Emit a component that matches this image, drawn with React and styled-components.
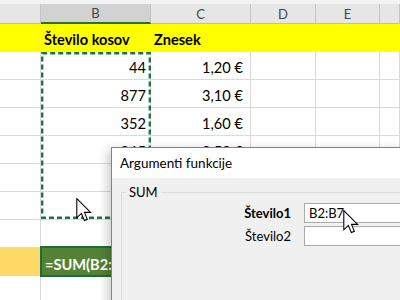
import React from 'react';
import styled, { createGlobalStyle } from 'styled-components';

const GlobalStyle = createGlobalStyle`
  html, body {
    margin: 0;
    padding: 0;
    background: #fff;
  }
  body {
    font-family: Lato, "Liberation Sans", sans-serif;
  }
`;

const Page = styled.div`
  position: relative;
  width: 400px;
  height: 300px;
  overflow: hidden;
  background: #fff;
`;

const TopStrip = styled.div`
  height: 4px;
  background: #f3f3f3;
`;

const Sheet = styled.div`
  position: relative;
  display: grid;
  grid-template-columns: 41px 110px 100px 65px 64px 1fr;
  grid-template-rows: 20px;
  grid-auto-rows: 28px;
`;

const ColHead = styled.div`
  box-sizing: border-box;
  display: flex;
  align-items: center;
  justify-content: center;
  background: ${p => (p.selected ? '#d2d2d2' : '#e6e6e6')};
  border-right: 1px solid #c4c4c4;
  border-bottom: ${p => (p.selected ? '2px solid #217346' : '1px solid #bdbdbd')};
  color: #444;
  font-size: 13px;
`;

const Cell = styled.div`
  box-sizing: border-box;
  display: flex;
  align-items: center;
  justify-content: ${p => (p.right ? 'flex-end' : 'flex-start')};
  padding: 3px ${p => (p.right ? p.pr || 4 : 3)}px 0 3px;
  background: ${p => p.fill || '#fff'};
  border-right: 1px solid ${p => p.fill || '#dadada'};
  border-bottom: 1px solid ${p => p.fill || '#dadada'};
  font-size: 14.6px;
  font-weight: ${p => (p.bold ? 700 : 400)};
  color: #000;
  white-space: nowrap;
  overflow: hidden;
`;

const FormulaCell = styled.div`
  box-sizing: border-box;
  margin: -2px 0 -1px -1px;
  display: flex;
  align-items: center;
  padding: 5px 0 0 3px;
  background: #548235;
  border: 2px solid #1e6b3c;
  color: #fff;
  font-size: 14.6px;
  font-weight: 700;
  white-space: nowrap;
  overflow: hidden;
  position: relative;
  z-index: 1;
`;

const Marquee = styled.svg`
  position: absolute;
  left: 41px;
  top: 48px;
  overflow: visible;
  z-index: 2;
`;

const Pointer = styled.svg`
  position: absolute;
  left: ${p => p.x}px;
  top: ${p => p.y}px;
  z-index: 10;
`;

const Dialog = styled.div`
  position: absolute;
  left: 111px;
  top: 147px;
  width: 320px;
  height: 180px;
  background: #f0f0f0;
  border: 1px solid #5c88c5;
  box-shadow: -3px 3px 10px rgba(0, 0, 0, 0.22);
  font-family: Lato, "Noto Sans", sans-serif;
  color: #000;
  z-index: 5;
`;

const TitleBar = styled.div`
  height: 30px;
  display: flex;
  align-items: center;
  padding-left: 8px;
  background: #fff;
  font-size: 13.5px;
`;

const Body = styled.div`
  padding: 6px 0 0 9px;
`;

const Group = styled.fieldset`
  margin: 0;
  padding: 3px 0 0 0;
  height: 200px;
  border: 1px solid #dcdcdc;
  border-right: none;
  border-bottom: none;
`;

const Legend = styled.legend`
  margin-left: 4px;
  padding: 0 3px;
  font-size: 13px;
`;

const Fields = styled.div`
  display: grid;
  grid-template-columns: 169px 1fr;
  column-gap: 13px;
  row-gap: 3px;
  align-items: center;
`;

const Label = styled.div`
  text-align: right;
  font-size: 13px;
  font-weight: ${p => (p.bold ? 700 : 400)};
`;

const Input = styled.div`
  box-sizing: border-box;
  height: 20px;
  width: 200px;
  display: flex;
  align-items: center;
  padding-left: 4px;
  background: #fff;
  border: 1px solid #ababab;
  font-size: 13px;
`;

const rows = [
  ['44', '1,20 €'],
  ['877', '3,10 €'],
  ['352', '1,60 €'],
  ['965', '2,50 €'],
  ['', ''],
  ['', ''],
  ['', ''],
];

const Arrow = ({ x, y }) => (
  <Pointer x={x} y={y} width="16" height="24" viewBox="0 0 13 20">
    <path
      d="M0.5 0.5 L0.5 16.5 L4.3 12.8 L6.8 18.8 L9.3 17.8 L6.9 12 L12 12 Z"
      fill="#fff"
      stroke="#000"
      strokeWidth="0.9"
      strokeLinejoin="miter"
    />
  </Pointer>
);

export default function App() {
  const heads = ['', 'B', 'C', 'D', 'E', ''];
  return (
    <Page>
      <GlobalStyle />
      <TopStrip />
      <Sheet>
        {heads.map((h, i) => (
          <ColHead key={'h' + i} selected={h === 'B'}>{h}</ColHead>
        ))}

        <Cell fill="#ffff00" />
        <Cell fill="#ffff00" bold>Število kosov</Cell>
        <Cell fill="#ffff00" bold>Znesek</Cell>
        <Cell fill="#ffff00" />
        <Cell fill="#ffff00" />
        <Cell fill="#ffff00" />

        {rows.map(([b, c], i) => (
          <React.Fragment key={'r' + i}>
            <Cell />
            <Cell right>{b}</Cell>
            <Cell right pr={7}>{c}</Cell>
            <Cell />
            <Cell />
            <Cell />
          </React.Fragment>
        ))}

        <Cell fill="#ffd966" />
        <FormulaCell>=SUM(B2:B</FormulaCell>
        <Cell />
        <Cell />
        <Cell />
        <Cell />

        {[0, 1].map(i => (
          <React.Fragment key={'e' + i}>
            <Cell />
            <Cell />
            <Cell />
            <Cell />
            <Cell />
            <Cell />
          </React.Fragment>
        ))}

        <Marquee width="110" height="167">
          <rect
            x="1.2"
            y="1.2"
            width="107.6"
            height="164.6"
            fill="none"
            stroke="#217346"
            strokeWidth="2.4"
            strokeDasharray="5 3"
          />
        </Marquee>
      </Sheet>

      <Arrow x={76} y={198} />

      <Dialog>
        <TitleBar>Argumenti funkcije</TitleBar>
        <Body>
          <Group>
            <Legend>SUM</Legend>
            <Fields>
              <Label bold>Število1</Label>
              <Input>B2:B7</Input>
              <Label>Število2</Label>
              <Input />
            </Fields>
          </Group>
        </Body>
      </Dialog>

      <Arrow x={343} y={210} />
    </Page>
  );
}
